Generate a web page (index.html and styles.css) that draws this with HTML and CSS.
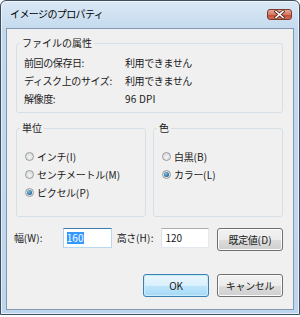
FILE: index.html
```html
<!DOCTYPE html>
<html lang="ja">
  <head>
    <meta charset="UTF-8" />
    <title>イメージのプロパティ</title>
    <link rel="stylesheet" href="styles.css">
  </head>
  <body>
    <div class="window">
      <div class="titlebar">
        <span class="title">イメージのプロパティ</span>
        <span class="close">
          <svg width="11" height="9" viewBox="0 0 11 9">
            <path d="M2 1.5 L9 7.5 M9 1.5 L2 7.5" stroke="#5a2a22" stroke-width="3.2" stroke-linecap="square" />
            <path d="M2 1.5 L9 7.5 M9 1.5 L2 7.5" stroke="#fff" stroke-width="1.6" stroke-linecap="square" />
          </svg>
        </span>
      </div>

      <div class="client">
        <fieldset class="group info">
          <legend>ファイルの属性</legend>
          <div class="row"><span class="key">前回の保存日:</span><span>利用できません</span></div>
          <div class="row"><span class="key">ディスク上のサイズ:</span><span>利用できません</span></div>
          <div class="row"><span class="key">解像度:</span><span class="latin">96 DPI</span></div>
        </fieldset>

        <div class="groups">
          <fieldset class="group opts">
            <legend>単位</legend>
            <label class="radio"><span class="dot"></span>インチ<span class="latin">(I)</span></label>
            <label class="radio"><span class="dot"></span>センチメートル<span class="latin">(M)</span></label>
            <label class="radio"><span class="dot on"></span>ピクセル<span class="latin">(P)</span></label>
          </fieldset>
          <fieldset class="group opts">
            <legend>色</legend>
            <label class="radio"><span class="dot"></span>白黒<span class="latin">(B)</span></label>
            <label class="radio"><span class="dot on"></span>カラー<span class="latin">(L)</span></label>
          </fieldset>
        </div>

        <div class="size">
          <span class="lbl lbl-w">幅<span class="latin">(W):</span></span>
          <div class="field focus"><span class="sel">160</span></div>
          <span class="lbl lbl-h">高さ<span class="latin">(H):</span></span>
          <div class="field">120</div>
          <button class="btn">既定値<span class="latin">(D)</span></button>
        </div>

        <div class="actions">
          <button class="btn default">OK</button>
          <button class="btn">キャンセル</button>
        </div>
      </div>
    </div>
  </body>
</html>
```

FILE: styles.css
```css
* {
  margin: 0;
  padding: 0;
  box-sizing: border-box;
}

body {
  background-color: #fff;
  font-family: "Noto Sans CJK JP", "Noto Sans", sans-serif;
  font-size: 10px;
  color: #1a1a1a;
}

.latin {
  letter-spacing: 0.2px;
}

.window {
  width: 300px;
  height: 315px;
  border: 1px solid #3d4e63;
  border-radius: 6px 6px 0 0;
  background: linear-gradient(#dbe8f5, #c3d9ee 30px, #bed6ed);
  box-shadow: inset 0 0 0 1px rgba(255, 255, 255, 0.6);
  padding: 0 5px 4px;
  display: flex;
  flex-direction: column;
}

.titlebar {
  height: 27px;
  display: flex;
  justify-content: space-between;
  align-items: flex-start;
}

.title {
  margin: 6px 0 0 4px;
  line-height: 14px;
  font-size: 10px;
  letter-spacing: -0.6px;
  color: #000;
}

.close {
  margin: 8px 2px 0 0;
  width: 25px;
  height: 11px;
  border: 1px solid #7a3a2e;
  border-radius: 3px;
  background: linear-gradient(#e9a999, #d67a66 50%, #c2492f 50%, #cf6f57);
  display: flex;
  justify-content: center;
  align-items: center;
}

.client {
  flex: 1;
  border: 1px solid #8498b0;
  background-color: #f0f0f0;
  padding: 0 10px 0 9px;
  display: flex;
  flex-direction: column;
}

.group {
  border: 1px solid #d5dfe5;
  border-radius: 3px;
  min-width: 0;
}

.group legend {
  line-height: 14px;
  padding: 0 2px;
}

.info {
  margin-top: 7px;
  padding: 3px 7px 5px;
}

.info legend {
  margin-left: -4px;
}

.row {
  display: flex;
  height: 18px;
  align-items: center;
  letter-spacing: -0.4px;
}

.key {
  width: 101px;
}

.groups {
  margin-top: 8px;
  display: flex;
  gap: 7px;
}

.opts {
  flex: 1;
  padding: 12px 8px 15px;
}

.opts legend {
  margin-left: -5px;
}

.radio {
  display: flex;
  align-items: center;
  height: 18px;
  letter-spacing: -0.3px;
}

.dot {
  width: 9px;
  height: 9px;
  margin-right: 3px;
  border-radius: 50%;
  border: 1px solid #9a9c9e;
  background: radial-gradient(circle at 50% 60%, #f4f4f4, #d3d3d3);
  display: flex;
  justify-content: center;
  align-items: center;
}

.dot.on::after {
  content: "";
  width: 5px;
  height: 5px;
  border-radius: 50%;
  background: radial-gradient(circle at 40% 35%, #7cc3ea, #1f5b8c 80%);
}

.size {
  margin: 11px 0 0 -2px;
  height: 23px;
  display: flex;
  align-items: flex-start;
}

.lbl {
  height: 20px;
  line-height: 19px;
  letter-spacing: -0.3px;
}

.lbl-w {
  width: 49px;
}

.lbl-h {
  width: 45px;
  margin-left: 5px;
}

.field {
  height: 20px;
  background-color: #fff;
  border: 1px solid;
  border-color: #abadb3 #e3e9ef #e3e9ef #e2e3ea;
  padding: 3px 0 0 3px;
  line-height: 12px;
  width: 48px;
}

.field.focus {
  width: 49px;
  border-color: #3d7bad #b7d9ed #b7d9ed #b5cfe7;
}

.sel {
  display: inline-block;
  background-color: #3399ff;
  color: #fff;
  height: 12px;
  padding-right: 1px;
}

.btn {
  width: 66px;
  height: 23px;
  font-family: inherit;
  font-size: 10px;
  color: #1a1a1a;
  border: 1px solid #707070;
  border-radius: 3px;
  background: linear-gradient(#f2f2f2, #ebebeb 50%, #dddddd 50%, #cfcfcf);
  box-shadow: inset 0 0 0 1px #fbfbfb;
  letter-spacing: -0.3px;
}

.size .btn {
  margin-left: 8px;
}

.actions {
  margin-top: 23px;
  display: flex;
  justify-content: flex-end;
  gap: 8px;
}

.btn.default {
  border-color: #3c7fb1;
  background: linear-gradient(#eaf6fd, #d9f0fc 50%, #bee6fd 50%, #a7d9f5);
  box-shadow: inset 0 0 0 1px #c9ecfd;
}
```
